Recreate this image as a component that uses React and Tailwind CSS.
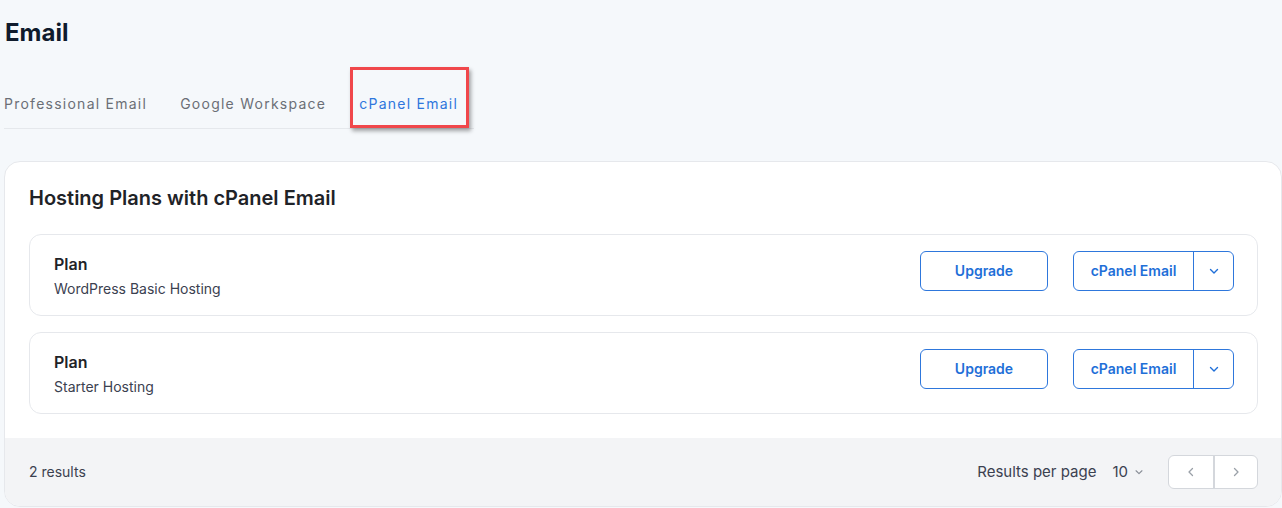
import React from "react";

function ChevronDown({ className }) {
  return (
    <svg viewBox="0 0 12 12" className={className} fill="none" stroke="currentColor" strokeWidth="1.4" strokeLinecap="round" strokeLinejoin="round">
      <path d="M2.5 4.5 6 8l3.5-3.5" />
    </svg>
  );
}

function ChevronLeft({ className }) {
  return (
    <svg viewBox="0 0 12 12" className={className} fill="none" stroke="currentColor" strokeWidth="1.3" strokeLinecap="round" strokeLinejoin="round">
      <path d="M7.5 2.5 4 6l3.5 3.5" />
    </svg>
  );
}

function ChevronRight({ className }) {
  return (
    <svg viewBox="0 0 12 12" className={className} fill="none" stroke="currentColor" strokeWidth="1.3" strokeLinecap="round" strokeLinejoin="round">
      <path d="M4.5 2.5 8 6l-3.5 3.5" />
    </svg>
  );
}

const plans = [
  { name: "WordPress Basic Hosting" },
  { name: "Starter Hosting" },
];

function PlanRow({ name }) {
  return (
    <div className="flex items-start justify-between rounded-xl border border-[#e6e8ec] bg-white py-4 pl-6 pr-[23px]">
      <div>
        <div className="mt-px text-base font-semibold leading-6 text-[#1f2328]">Plan</div>
        <div className="mt-[3px] text-sm leading-5 text-[#3b4150]">{name}</div>
      </div>
      <div className="flex items-center gap-[25px]">
        <button className="h-10 w-[128px] rounded-md border border-[#2e77dc] text-sm font-semibold text-[#1f6fd8]">
          Upgrade
        </button>
        <div className="flex h-10 rounded-md border border-[#2e77dc]">
          <button className="w-[119px] text-sm font-semibold text-[#1f6fd8]">cPanel Email</button>
          <button className="flex w-10 items-center justify-center border-l border-[#2e77dc] text-[#1f6fd8]">
            <ChevronDown className="h-3 w-3" />
          </button>
        </div>
      </div>
    </div>
  );
}

export default function App() {
  return (
    <div className="min-h-[508px] bg-[#f5f8fb] pl-1 font-['Inter','Liberation_Sans',sans-serif]">
      <h1 className="pl-px pt-[17px] text-2xl font-bold leading-8 text-[#0f1b2d]">Email</h1>

      <div className="relative mt-[45px] flex w-[470px] gap-[33px] border-b border-[#e5e8ec] pb-[14px] text-sm leading-5 tracking-[1.25px]">
        <span className="text-[#6b6f76]">Professional Email</span>
        <span className="text-[#6b6f76]">Google Workspace</span>
        <span className="text-[#2f76dd]">cPanel Email</span>
        <div className="pointer-events-none absolute left-[346px] top-[-27px] h-[61px] w-[119px] border-[3px] border-[#f0474b] shadow-[2px_3px_4px_rgba(0,0,0,0.35)]" />
      </div>

      <div className="mt-[32px] overflow-hidden rounded-2xl border border-[#e6e8ec] bg-white">
        <div className="pb-6 pl-6 pr-[23px] pt-[22px]">
          <h2 className="text-[20px] font-semibold leading-7 text-[#1f2328]">Hosting Plans with cPanel Email</h2>
          <div className="mt-[22px] flex flex-col gap-4">
            {plans.map((p) => (
              <PlanRow key={p.name} name={p.name} />
            ))}
          </div>
        </div>

        <div className="flex h-[68px] items-center justify-between bg-[#f3f4f6] pl-6 pr-[23px]">
          <span className="text-sm text-[#3b4150]">2 results</span>
          <div className="flex items-center">
            <span className="text-[15px] text-[#3b4150]">Results per page</span>
            <span className="ml-4 text-[15px] text-[#3b4150]">10</span>
            <ChevronDown className="ml-[6px] h-[10px] w-[10px] text-[#8a8f98]" />
            <div className="ml-[24px] flex h-[34px] rounded-md border border-[#d4d7dc] bg-white">
              <button className="flex w-11 items-center justify-center text-[#9aa0a8]">
                <ChevronLeft className="h-3 w-3" />
              </button>
              <button className="flex w-11 items-center justify-center border-l-2 border-[#d4d7dc] text-[#9aa0a8]">
                <ChevronRight className="h-3 w-3" />
              </button>
            </div>
          </div>
        </div>
      </div>
    </div>
  );
}
